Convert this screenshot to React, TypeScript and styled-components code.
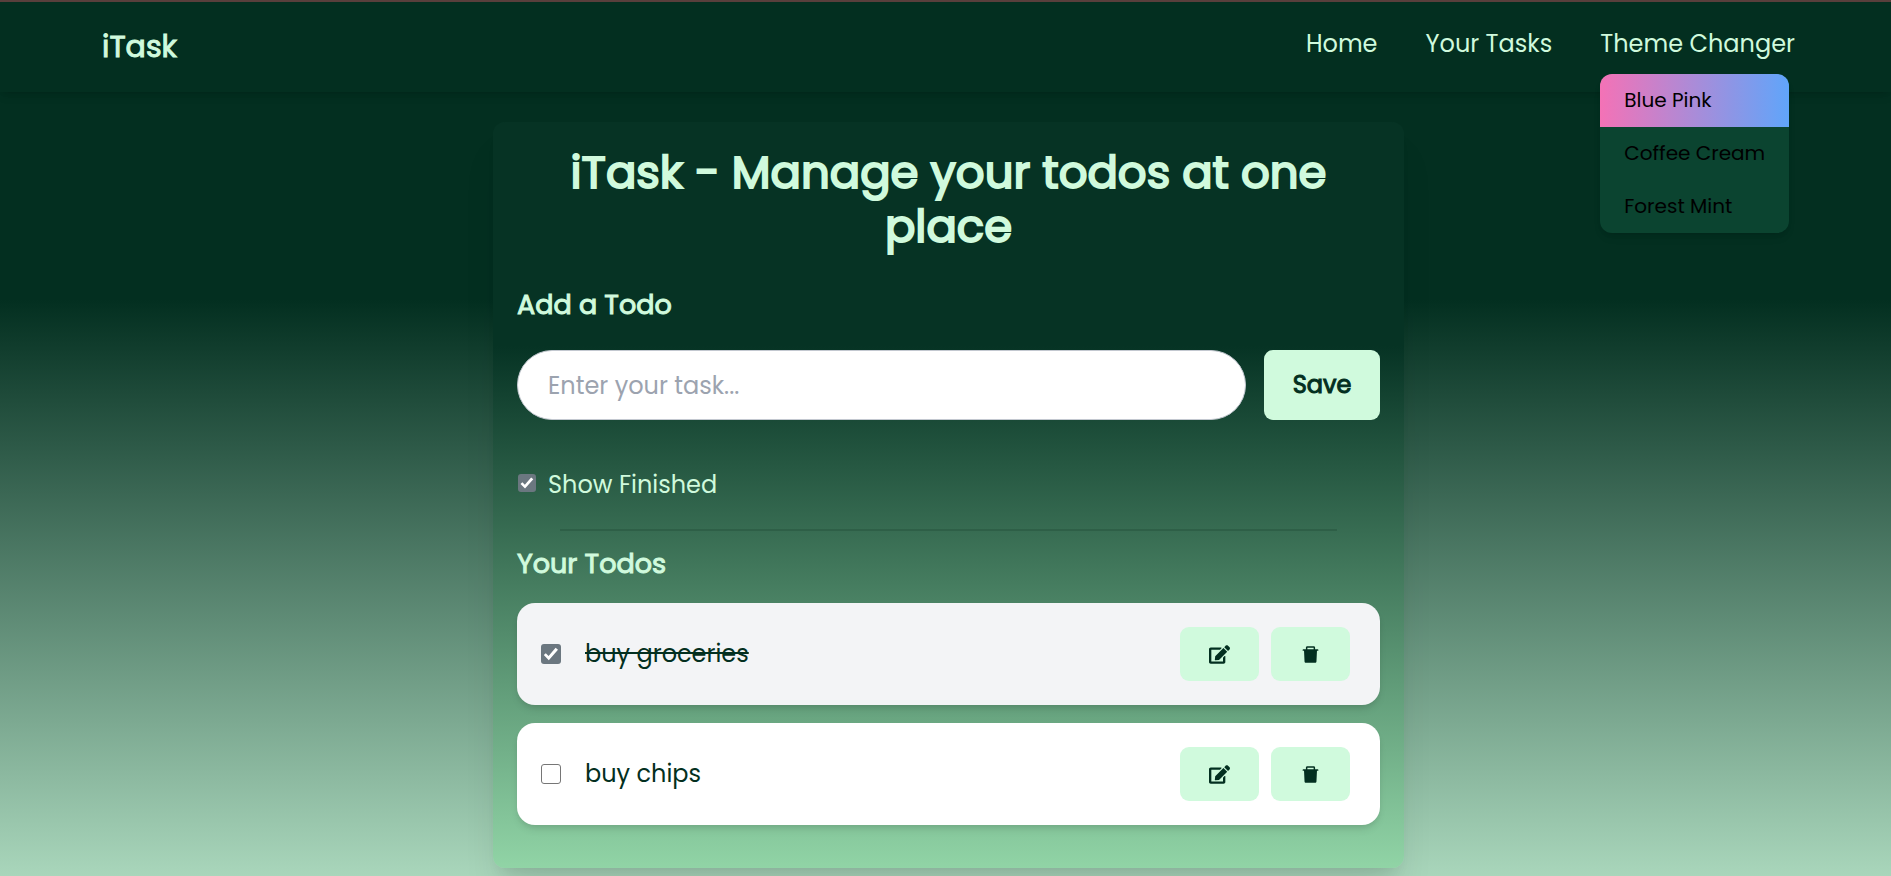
import React, { useState } from "react";
import styled, { createGlobalStyle } from "styled-components";
import { FaEdit } from "react-icons/fa";
import { AiFillDelete } from "react-icons/ai";

const color = {
  deep: "#032f20",
  mint: "#d0fadd",
  panel: "#0b4430",
};

const GlobalStyle = createGlobalStyle`
  *, *::before, *::after { box-sizing: border-box; }
  body {
    margin: 0;
    font-family: Poppins, Inter, "Open Sans", sans-serif;
    font-size: 24px;
    line-height: 36px;
  }
  h1, h2, p, ul { margin: 0; padding: 0; }
  ul { list-style: none; }
  button, input { font: inherit; margin: 0; }
  button { border: 0; cursor: pointer; }
`;

const Page = styled.div`
  min-height: 100vh;
  padding-bottom: 8px;
  border-top: 2px solid #593f3c;
  background: linear-gradient(to bottom, ${color.deep} 0, ${color.deep} 298px, #a9d6bb 100%);
`;

const Navbar = styled.nav`
  position: relative;
  z-index: 1;
  display: flex;
  justify-content: space-between;
  height: 90px;
  padding: 24px 96px 0 102px;
  color: ${color.mint};
  box-shadow: 0 6px 9px -2px rgba(0, 0, 0, 0.1), 0 3px 6px -3px rgba(0, 0, 0, 0.1);
`;

const Logo = styled.a`
  font-size: 30px;
  line-height: 42px;
  -webkit-text-stroke: 1px currentColor;
  color: inherit;
  text-decoration: none;
`;

const NavList = styled.ul`
  display: flex;
  gap: 48px;
`;

const NavItem = styled.li`
  position: relative;
`;

const NavLink = styled.a`
  color: inherit;
  text-decoration: none;
`;

const NavButton = styled.button`
  padding: 0;
  background: none;
  color: inherit;
`;

const ThemeMenu = styled.div`
  position: absolute;
  top: 48px;
  left: 0;
  overflow: hidden;
  border-radius: 12px;
  background: ${color.panel};
  box-shadow: 0 6px 9px -2px rgba(0, 0, 0, 0.1), 0 3px 6px -3px rgba(0, 0, 0, 0.1);
`;

const ThemeOption = styled.button<{ $active?: boolean }>`
  display: block;
  width: 100%;
  padding: 12px 24px;
  font-size: 20px;
  line-height: 29px;
  text-align: left;
  white-space: nowrap;
  color: #000;
  background: ${(p) => (p.$active ? "linear-gradient(to right, #f472b6, #60a5fa)" : "none")};
`;

const Main = styled.main`
  display: flex;
  justify-content: center;
  padding: 30px 0 0 6px;
`;

const Card = styled.section`
  width: 100%;
  max-width: 911px;
  padding: 24px 24px 43px;
  border-radius: 12px;
  color: ${color.mint};
  background: linear-gradient(to bottom, #063324 0, #063324 30%, #91d4a6 100%);
  box-shadow: 0 30px 38px -8px rgba(0, 0, 0, 0.1), 0 12px 15px -9px rgba(0, 0, 0, 0.1);
`;

const Title = styled.h1`
  padding: 0 24px;
  font-size: 45px;
  line-height: 54px;
  font-weight: 400;
  -webkit-text-stroke: 2px currentColor;
  text-align: center;
`;

const Subtitle = styled.h2`
  font-size: 27px;
  line-height: 42px;
  font-weight: 400;
  -webkit-text-stroke: 1px currentColor;
`;

const AddSection = styled.div`
  padding-top: 30px;
`;

const AddForm = styled.form`
  display: flex;
  gap: 18px;
  padding-top: 24px;
`;

const TaskInput = styled.input`
  flex: 1;
  min-width: 0;
  height: 70px;
  padding: 0 30px;
  border: 1px solid #c3c8d0;
  border-radius: 35px;
  background: #fff;
  color: ${color.deep};
  &::placeholder { color: #9ca3af; opacity: 1; }
`;

const SaveButton = styled.button`
  width: 116px;
  border-radius: 9px;
  -webkit-text-stroke: 1px currentColor;
  color: ${color.deep};
  background: ${color.mint};
`;

const Checkbox = styled.input<{ $size: number }>`
  appearance: none;
  flex: none;
  width: ${(p) => p.$size}px;
  height: ${(p) => p.$size}px;
  border: 1px solid #767676;
  border-radius: 3px;
  background: #fff;
  &:checked { border: 0; background: #6b7780; }
  &:checked::after {
    content: "";
    display: block;
    height: 100%;
    background: #fff;
    clip-path: polygon(14% 55%, 24% 46%, 38% 60%, 73% 19%, 85% 29%, 39% 81%);
  }
`;

const FilterRow = styled.label`
  display: flex;
  align-items: flex-start;
  gap: 12px;
  padding: 47px 0 0 1px;
  input { margin-top: 7px; }
`;

const Divider = styled.hr`
  width: 90%;
  height: 2px;
  margin: 26px auto 12px;
  border: 0;
  background: #2e5f47;
`;

const TodoList = styled.ul`
  display: flex;
  flex-direction: column;
  gap: 18px;
  padding-top: 18px;
`;

const TodoRow = styled.li<{ $done: boolean }>`
  display: flex;
  align-items: center;
  justify-content: space-between;
  padding: 24px 30px 24px 24px;
  border-radius: 18px;
  color: ${color.deep};
  background: ${(p) => (p.$done ? "#f3f4f6" : "#fff")};
  box-shadow: 0 6px 9px -2px rgba(0, 0, 0, 0.1), 0 3px 6px -3px rgba(0, 0, 0, 0.1);
`;

const TodoLabel = styled.label<{ $done: boolean }>`
  display: flex;
  align-items: center;
  gap: 24px;
  span { text-decoration: ${(p) => (p.$done ? "line-through" : "none")}; }
`;

const Actions = styled.div`
  display: flex;
  gap: 12px;
`;

const IconButton = styled.button`
  display: flex;
  align-items: center;
  justify-content: center;
  width: 79px;
  height: 54px;
  padding: 0;
  border-radius: 9px;
  font-size: 21px;
  color: ${color.deep};
  background: ${color.mint};
`;

const themes = ["Blue Pink", "Coffee Cream", "Forest Mint"];

export default function App() {
  const [task, setTask] = useState("");
  const [showFinished, setShowFinished] = useState(true);
  const [todos, setTodos] = useState([
    { id: 1, text: "buy groceries", done: true },
    { id: 2, text: "buy chips", done: false },
  ]);

  const save = (e: React.FormEvent) => {
    e.preventDefault();
    if (!task.trim()) return;
    setTodos([...todos, { id: Date.now(), text: task, done: false }]);
    setTask("");
  };
  const toggle = (id: number) =>
    setTodos(todos.map((t) => (t.id === id ? { ...t, done: !t.done } : t)));
  const remove = (id: number) => setTodos(todos.filter((t) => t.id !== id));
  const edit = (id: number) => {
    setTask(todos.find((t) => t.id === id)?.text ?? "");
    remove(id);
  };

  return (
    <Page>
      <GlobalStyle />
      <Navbar>
        <Logo href="#">iTask</Logo>
        <NavList>
          <NavItem><NavLink href="#">Home</NavLink></NavItem>
          <NavItem><NavLink href="#tasks">Your Tasks</NavLink></NavItem>
          <NavItem>
            <NavButton type="button" aria-haspopup="true">Theme Changer</NavButton>
            <ThemeMenu>
              {themes.map((name, i) => (
                <ThemeOption key={name} type="button" $active={i === 0}>{name}</ThemeOption>
              ))}
            </ThemeMenu>
          </NavItem>
        </NavList>
      </Navbar>
      <Main>
        <Card>
          <Title>iTask - Manage your todos at one place</Title>
          <AddSection>
            <Subtitle>Add a Todo</Subtitle>
            <AddForm onSubmit={save}>
              <TaskInput
                type="text"
                aria-label="Task"
                placeholder="Enter your task..."
                value={task}
                onChange={(e) => setTask(e.target.value)}
              />
              <SaveButton type="submit">Save</SaveButton>
            </AddForm>
          </AddSection>
          <FilterRow>
            <Checkbox
              type="checkbox"
              $size={18}
              checked={showFinished}
              onChange={() => setShowFinished(!showFinished)}
            />
            <span>Show Finished</span>
          </FilterRow>
          <Divider />
          <Subtitle id="tasks">Your Todos</Subtitle>
          <TodoList>
            {todos.filter((t) => showFinished || !t.done).map((t) => (
              <TodoRow key={t.id} $done={t.done}>
                <TodoLabel $done={t.done}>
                  <Checkbox type="checkbox" $size={20} checked={t.done} onChange={() => toggle(t.id)} />
                  <span>{t.text}</span>
                </TodoLabel>
                <Actions>
                  <IconButton type="button" aria-label="Edit" onClick={() => edit(t.id)}><FaEdit /></IconButton>
                  <IconButton type="button" aria-label="Delete" onClick={() => remove(t.id)}><AiFillDelete /></IconButton>
                </Actions>
              </TodoRow>
            ))}
          </TodoList>
        </Card>
      </Main>
    </Page>
  );
}
